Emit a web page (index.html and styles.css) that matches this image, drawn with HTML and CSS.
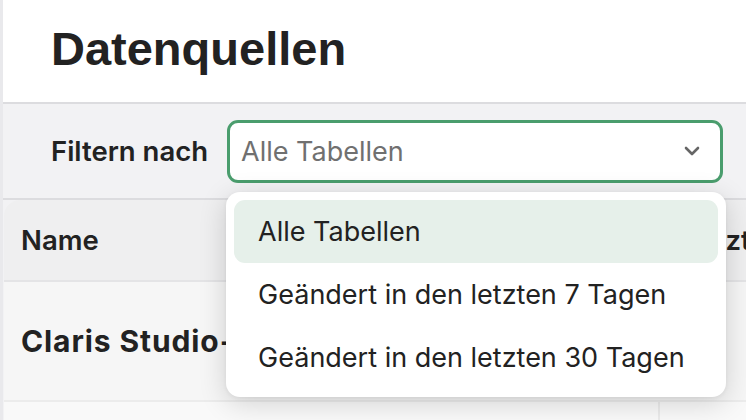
FILE: index.html
```html
<!DOCTYPE html>
<html lang="de">
<head>
    <meta charset="UTF-8">
    <meta name="viewport" content="width=device-width, initial-scale=1.0">
    <title>Datenquellen</title>
    <link rel="stylesheet" href="styles.css">
</head>
<body>
    <div class="edge"></div>
    <main class="page">
        <header class="page-header">
            <h1>Datenquellen</h1>
        </header>

        <div class="filter-bar">
            <span class="filter-label">Filtern nach</span>
            <div class="select-wrap">
                <div class="select">
                    <span class="placeholder">Alle Tabellen</span>
                    <svg class="chevron" width="16" height="10" viewBox="0 0 16 10">
                        <path d="M2 2 L8 8 L14 2" fill="none" stroke="#666" stroke-width="2.6" stroke-linecap="round" stroke-linejoin="round"/>
                    </svg>
                </div>
                <ul class="menu">
                    <li class="option active">Alle Tabellen</li>
                    <li class="option">Geändert in den letzten 7 Tagen</li>
                    <li class="option">Geändert in den letzten 30 Tagen</li>
                </ul>
            </div>
        </div>

        <div class="table">
            <div class="row head">
                <div class="cell">Name</div>
                <div class="cell">Letzte Änderung</div>
            </div>
            <div class="row">
                <div class="cell name">Claris Studio-Tabelle</div>
                <div class="cell"></div>
            </div>
            <div class="row last">
                <div class="cell"></div>
                <div class="cell side"></div>
            </div>
        </div>
    </main>
</body>
</html>
```

FILE: styles.css
```css
body {
    margin: 0;
    display: flex;
    height: 420px;
    overflow: hidden;
    background-color: #f2f2f4;
    font-family: 'Inter', 'Noto Sans', sans-serif;
    color: #222;
}

.edge {
    width: 3px;
    flex: none;
    background-color: #e9e9ec;
}

.page {
    flex: 1;
    min-width: 0;
}

/* Header */
.page-header {
    height: 104px;
    box-sizing: border-box;
    background-color: #fff;
    border-bottom: 2px solid #dcdcdf;
    padding-left: 48px;
}

.page-header h1 {
    margin: 0;
    padding-top: 23px;
    font-family: 'Liberation Sans', Arial, sans-serif;
    font-size: 47px;
    font-weight: bold;
    line-height: 52px;
    color: #222;
}

/* Filter bar */
.filter-bar {
    display: flex;
    align-items: center;
    gap: 19px;
    height: 96px;
    padding-left: 48px;
    box-sizing: border-box;
    border-bottom: 2px solid #dcdcdf;
}

.filter-label {
    font-size: 27.5px;
    font-weight: 600;
    color: #222;
}

.select-wrap {
    position: relative;
}

.select {
    width: 496px;
    height: 63px;
    box-sizing: border-box;
    border: 3px solid #4a9d6d;
    border-radius: 11px;
    background-color: #fff;
    display: flex;
    align-items: center;
    justify-content: space-between;
    padding: 0 20px 0 11px;
}

.placeholder {
    font-size: 27px;
    color: #707070;
}

.menu {
    position: absolute;
    top: 72px;
    left: -1px;
    width: 500px;
    margin: 0;
    padding: 8px;
    box-sizing: border-box;
    list-style: none;
    background-color: #fff;
    border-radius: 14px;
    box-shadow: 0 6px 28px rgba(0, 0, 0, 0.16), 0 1px 4px rgba(0, 0, 0, 0.06);
    z-index: 2;
}

.option {
    height: 63px;
    display: flex;
    align-items: center;
    padding-left: 24px;
    font-size: 27px;
    color: #222;
    border-radius: 11px;
}

.option.active {
    background-color: #e6f0ea;
}

/* Table */
.table {
    margin-left: 1px;
    border-top-left-radius: 16px;
    overflow: hidden;
}

.row {
    display: grid;
    grid-template-columns: 654px 1fr;
    height: 118px;
    background-color: #f6f6f6;
    border-bottom: 2px solid #ececec;
}

.row.head {
    height: 80px;
    background-color: #efeff0;
    border-bottom: 2px solid #e4e4e6;
}

.row.last {
    height: 18px;
    border-bottom: none;
    background-color: #f9f9f9;
}

.cell {
    display: flex;
    align-items: center;
    padding-left: 17px;
    font-size: 27.5px;
    font-weight: 600;
    white-space: nowrap;
    overflow: hidden;
}

.row.head .cell + .cell {
    padding-left: 26px;
}

.cell.name {
    font-size: 30px;
    font-weight: 700;
    letter-spacing: 0.9px;
}

.cell.side {
    border-left: 2px solid #ebebeb;
}
```
